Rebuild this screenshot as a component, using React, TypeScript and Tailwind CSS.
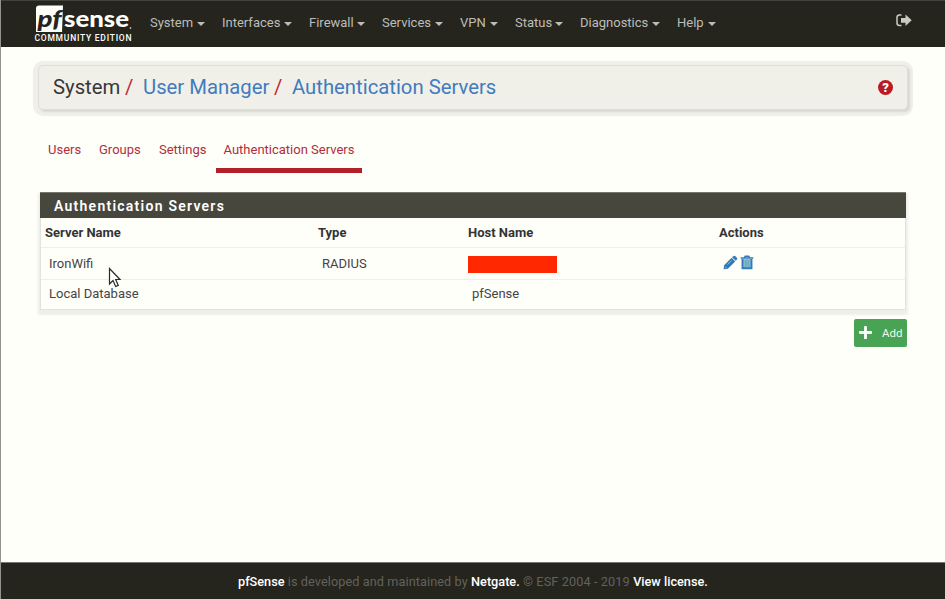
import React from "react";
import { FaPlus } from "react-icons/fa";

const menus = [
  { label: "System", width: "w-[72px]" },
  { label: "Interfaces", width: "w-[87px]" },
  { label: "Firewall", width: "w-[73px]" },
  { label: "Services", width: "w-[78px]" },
  { label: "VPN", width: "w-[55px]" },
  { label: "Status", width: "w-[65px]" },
  { label: "Diagnostics", width: "w-[97px]" },
  { label: "Help", width: "w-[56px]" },
];

const tabs = [
  { label: "Users", width: "w-[51px]" },
  { label: "Groups", width: "w-[60px]" },
  { label: "Settings", width: "w-[58px]" },
];

function Logo() {
  return (
    <svg width="100" height="44" viewBox="0 0 100 44" className="block" fill="#fffffa">
      <path d="M5 4.500H29L28 31H2V7.500Q2 4.500 5 4.500Z" />
      <text x="3.500" y="25.500" fontFamily="Lato, sans-serif" fontWeight="900" fontStyle="italic" fontSize="23" textLength="24" lengthAdjust="spacingAndGlyphs" fill="#25251e">pf</text>
      <text x="30" y="26.300" fontFamily="Lato, sans-serif" fontWeight="900" fontSize="23" textLength="65" lengthAdjust="spacingAndGlyphs">sense</text>
      <circle cx="96.500" cy="27" r="0.800" />
      <text x="0.500" y="40.300" fontFamily="Roboto, sans-serif" fontWeight="500" fontSize="8.500" textLength="97">COMMUNITY EDITION</text>
    </svg>
  );
}

function SignOutIcon() {
  return (
    <svg width="16" height="13" viewBox="0 0 16 13" className="block">
      <path d="M5.500 1H3.500Q1 1 1 3.500V9Q1 11.500 3.500 11.500H5.500" fill="none" stroke="#cbcbc0" strokeWidth="1.500" />
      <path d="M5 4H9.500V0.500L15.700 6.300L9.500 12V8.700H5Z" fill="#cbcbc0" />
    </svg>
  );
}

function PencilIcon() {
  return (
    <svg width="15" height="15" viewBox="0 0 15 15" className="block" fill="#337ab7">
      <path d="M10.200 1.200Q11.300 0.200 12.400 1.200L13.900 2.700Q14.800 3.600 13.900 4.600L12.700 5.800L9.100 2.300Z" />
      <path d="M8.600 2.800L12.200 6.400L4.900 13.700L0.600 14.200L1.200 10.200Z" />
      <path d="M1.900 11.500L3.500 13.100M4.500 9.500L8.500 5.500" stroke="#b9d4e8" strokeWidth="0.700" />
    </svg>
  );
}

function TrashIcon() {
  return (
    <svg width="14" height="15" viewBox="0 0 14 15" className="block">
      <path d="M0.700 3H13.300M4.500 2.700L5.200 1.200H8.800L9.500 2.700" fill="none" stroke="#337ab7" strokeWidth="1.500" />
      <path d="M2.500 4V13.200H11.500V4" fill="#8cbed4" stroke="#337ab7" strokeWidth="1.900" />
      <path d="M5.300 5V12M7 5V12M8.700 5V12" stroke="#5599bb" strokeWidth="0.700" />
    </svg>
  );
}

export default function App() {
  return (
    <div className="relative flex h-[599px] w-[945px] flex-col overflow-hidden border-l border-[#92928e] bg-[#fffffa] font-['Roboto',sans-serif] text-[13px] text-[#444447]">
      <header className="flex h-[47px] shrink-0 border-t border-[#43433d] bg-[#25251e] pl-[33px] -ml-px">
        <div className="w-[117px] pl-px"><Logo /></div>
        <nav className="flex h-[43px] items-center text-[13px] text-[#bdbdb8]">
          {menus.map((m) => (
            <div key={m.label} className={`flex shrink-0 items-center justify-between pr-[17px] ${m.width}`}>
              <span>{m.label}</span>
              <span className="mt-[2px] border-x-[4px] border-t-4 border-x-transparent border-t-[#bdbdb8]" />
            </div>
          ))}
        </nav>
        <div className="ml-auto mr-[33px] pt-[13px]"><SignOutIcon /></div>
      </header>

      <main className="flex grow flex-col pl-[38px] pr-[38px]">
        <div className="mt-[18px] flex h-[45px] shrink-0 items-center rounded-[5px] border border-[#deded8] bg-[#f0f0e9] pl-[14px] pr-[14px] shadow-[2px_2px_2px_0_#d9d9d3,0_1px_0_5px_#f0f0e8] -ml-px -mr-px">
          <h1 className="flex text-[20.3px] leading-none text-[#37373a]">
            <span className="w-[72px]">System</span>
            <span className="w-[18px] text-[#c02b39]">/</span>
            <span className="w-[131px] text-[#427bbf]">User Manager</span>
            <span className="w-[18px] text-[#c02b39]">/</span>
            <span className="text-[#427bbf]">Authentication Servers</span>
          </h1>
          <span className="ml-auto flex h-[15px] w-[15px] items-center justify-center rounded-full bg-[#b71c24] text-[13px] font-black leading-none text-white">?</span>
        </div>

        <div className="mt-[30px] flex h-[33px] shrink-0 pl-[9px] text-[13px] leading-[20px] text-[#b22c3d]">
          {tabs.map((t) => (
            <span key={t.label} className={`shrink-0 ${t.width}`}>{t.label}</span>
          ))}
          <span className="-ml-px h-[33px] w-[146px] border-b-[5px] border-[#b2202a] text-center">Authentication Servers</span>
        </div>

        <section className="mt-[19px] ml-px mr-px h-[118px] shrink-0 border border-[#e3e3dd] shadow-[0_3px_2px_2px_#efefe9]">
          <h2 className="-mx-px -mt-px h-[26px] border-t border-[#77776f] bg-[#47473e] pl-[14px] text-[14px] font-semibold leading-[26px] tracking-[1.25px] text-white">Authentication Servers</h2>
          <div className="grid h-[30px] grid-cols-[273px_150px_251px_1fr] items-center border-b border-[#eeeeea] pl-1 font-bold text-[#333336]">
            <span>Server Name</span>
            <span>Type</span>
            <span>Host Name</span>
            <span>Actions</span>
          </div>
          <div className="grid h-[32px] grid-cols-[273px_146px_255px_1fr] items-center border-b border-[#eeeeea] pl-2">
            <span>IronWifi</span>
            <span>RADIUS</span>
            <span className="mt-[2px] h-[17px] w-[89px] bg-[#ff2800]" />
            <span className="flex gap-[2px] pb-[2px]"><PencilIcon /><TrashIcon /></span>
          </div>
          <div className="grid h-[29px] grid-cols-[273px_150px_251px_1fr] items-center pb-px pl-2">
            <span>Local Database</span>
            <span />
            <span>pfSense</span>
            <span />
          </div>
        </section>

        <button className="mt-[9px] flex h-[28px] w-[53px] shrink-0 items-center self-end rounded-[2px] bg-[#49a354] pl-[4px] text-[11.5px] text-[#edf8e9]">
          <FaPlus size={15} color="#fff" className="mb-px" />
          <span className="ml-[9px] pt-px">Add</span>
        </button>
      </main>

      <footer className="-ml-px flex h-[37px] shrink-0 items-center whitespace-pre border-t border-[#77776f] bg-[#25251e] pl-[238px] pt-px text-[12.7px] text-[#62625d]">
        <b className="font-medium text-white">pfSense</b>
        <span className="tracking-[0.09px]"> is developed and maintained by </span>
        <b className="font-medium text-white">Netgate.</b>
        <span className="tracking-[0.12px]"> © ESF 2004 - 2019 </span>
        <b className="font-medium text-white">View license.</b>
      </footer>

      <svg className="absolute left-[107px] top-[267px]" width="14" height="21" viewBox="0 0 14 21">
        <path d="M1.500 1.500V17L5 13.600L7.700 19.500L10.300 18.400L7.700 12.500H12Z" fill="#fffffa" stroke="#29292c" strokeWidth="1.200" />
      </svg>
    </div>
  );
}
